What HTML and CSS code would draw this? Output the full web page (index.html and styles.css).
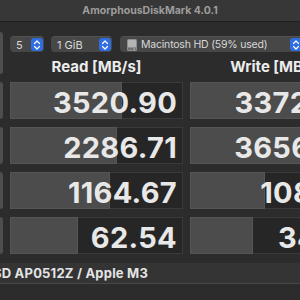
FILE: index.html
```html
<!DOCTYPE html>
<html lang="en">
<head>
    <meta charset="utf-8" />
    <title>AmorphousDiskMark 4.0.1</title>
    <link rel="stylesheet" href="styles.css">
</head>
<body>
    <div class="titlebar">AmorphousDiskMark 4.0.1</div>

    <div class="bench">
        <div class="side all"></div>

        <div class="controls">
            <div class="popup count">
                <span class="label">5</span>
                <span class="stepper"><svg width="12" height="14" viewBox="0 0 12 14"><path d="M3.5 5.5 6 3l2.5 2.5M3.5 8.5 6 11l2.5-2.5" fill="none" stroke="#fff" stroke-width="1.2" stroke-linecap="round" stroke-linejoin="round"/></svg></span>
            </div>
            <div class="popup size">
                <span class="label">1 GiB</span>
                <span class="stepper"><svg width="12" height="14" viewBox="0 0 12 14"><path d="M3.5 5.5 6 3l2.5 2.5M3.5 8.5 6 11l2.5-2.5" fill="none" stroke="#fff" stroke-width="1.2" stroke-linecap="round" stroke-linejoin="round"/></svg></span>
            </div>
            <div class="popup disk">
                <svg class="hdd" width="10" height="12" viewBox="0 0 10 12">
                    <rect x="0" y="0" width="10" height="12" rx="1.5" fill="#8e8e8e"/>
                    <rect x="1" y="1" width="8" height="7" rx="1" fill="#b4b4b4"/>
                    <rect x="1" y="9" width="8" height="2" fill="#6f6f6f"/>
                    <rect x="6.5" y="9.5" width="1.5" height="1" fill="#cfcfcf"/>
                </svg>
                <span class="label">Macintosh HD (59% used)</span>
                <span class="stepper"><svg width="12" height="14" viewBox="0 0 12 14"><path d="M3.5 5.5 6 3l2.5 2.5M3.5 8.5 6 11l2.5-2.5" fill="none" stroke="#fff" stroke-width="1.2" stroke-linecap="round" stroke-linejoin="round"/></svg></span>
            </div>
        </div>

        <div class="head">Read [MB/s]</div>
        <div class="head">Write [MB/s]</div>

        <div class="side"></div>
        <div class="cell"><div class="fill" style="width:65.3%"></div><span class="val">3520.90</span></div>
        <div class="cell"><div class="fill" style="width:65%"></div><span class="val">3372.45</span></div>

        <div class="side"></div>
        <div class="cell"><div class="fill" style="width:62.4%"></div><span class="val">2286.71</span></div>
        <div class="cell"><div class="fill" style="width:65.6%"></div><span class="val">3656.02</span></div>

        <div class="side"></div>
        <div class="cell"><div class="fill" style="width:58.4%"></div><span class="val">1164.67</span></div>
        <div class="cell"><div class="fill" style="width:43.6%"></div><span class="val">108.37</span></div>

        <div class="side"></div>
        <div class="cell"><div class="fill" style="width:39.9%"></div><span class="val">62.54</span></div>
        <div class="cell"><div class="fill" style="width:36.6%"></div><span class="val">34.81</span></div>
    </div>

    <div class="footer">
        <div class="device"><span>APPLE SSD AP0512Z / Apple M3</span></div>
    </div>
</body>
</html>
```

FILE: styles.css
```css
body {
    margin: 0;
    width: 300px;
    height: 300px;
    overflow: hidden;
    background-color: #2c2c2c;
    font-family: Inter, "Noto Sans", sans-serif;
    color: #e4e4e4;
}

.titlebar {
    height: 21px;
    line-height: 21px;
    background-color: #373737;
    border-bottom: 1px solid #1f1f1f;
    text-align: center;
    font-size: 10.5px;
    font-weight: 700;
    color: #9d9d9d;
}

.bench {
    display: grid;
    grid-template-columns: 3px 173px 173px;
    grid-template-rows: 20px 14px repeat(4, 37px);
    column-gap: 7px;
    row-gap: 8px;
    padding-top: 10px;
}

.side {
    background-color: #4e4e4e;
    border-radius: 0 3px 3px 0;
}

.side.all {
    grid-row: 1 / 3;
}

.controls {
    grid-column: 2 / 4;
    align-self: end;
    display: flex;
    gap: 7px;
    height: 16px;
}

.popup {
    display: flex;
    align-items: center;
    height: 16px;
    padding-left: 6px;
    padding-right: 1px;
    background-color: #474747;
    border-top: 1px solid #525252;
    border-radius: 4px;
    box-sizing: border-box;
    font-size: 11px;
    color: #d8d8d8;
}

.popup .label {
    flex: 1;
    white-space: nowrap;
}

.count {
    width: 34px;
}

.size {
    width: 61px;
}

.disk {
    width: 183px;
    margin-left: 1px;
    padding-left: 7px;
    flex-shrink: 0;
    font-size: 10.5px;
    letter-spacing: -0.2px;
}

.hdd {
    margin-right: 4px;
}

.stepper {
    display: flex;
    width: 12px;
    height: 13px;
    background-color: #2f6ee0;
    border-radius: 3px;
}

.head {
    text-align: center;
    font-size: 15px;
    line-height: 14px;
    font-weight: 700;
    color: #ececec;
}

.cell {
    position: relative;
    background-color: #262626;
    border: 1px solid #3a3a3a;
    box-sizing: border-box;
    display: flex;
    align-items: center;
    justify-content: flex-end;
    padding-right: 5px;
}

.fill {
    position: absolute;
    left: -1px;
    top: -1px;
    bottom: -1px;
    background-color: #4c4c4c;
    border: 1px solid #555;
    box-sizing: border-box;
}

.val {
    position: relative;
    font-size: 29px;
    font-weight: 700;
    letter-spacing: 0.3px;
    color: #e8e8e8;
    margin-top: 3px;
}

.footer {
    margin-top: 9px;
    height: 20px;
    background-color: #343434;
    border-bottom: 1px solid #474747;
}

.device {
    width: 148px;
    height: 20px;
    display: flex;
    justify-content: flex-end;
    align-items: center;
    white-space: nowrap;
    font-size: 13px;
    letter-spacing: 0.2px;
    font-weight: 700;
    color: #e4e4e4;
}
```
